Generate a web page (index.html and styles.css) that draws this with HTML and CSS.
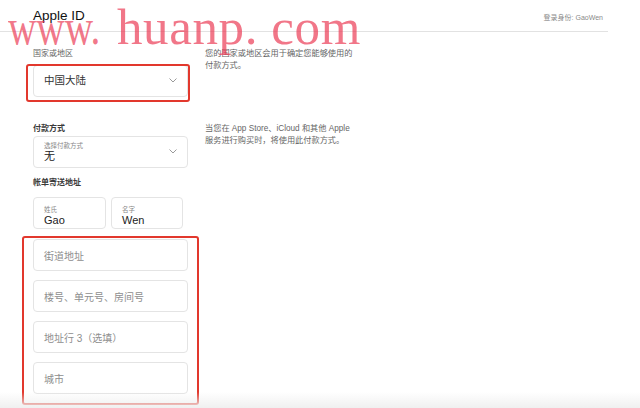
FILE: index.html
```html
<!DOCTYPE html>
<html lang="zh-CN">
<head>
<meta charset="utf-8">
<title>Apple ID</title>
<link rel="stylesheet" href="styles.css">
</head>
<body>
<header class="header">
  <div class="title">Apple ID</div>
  <div class="signed">登录身份: GaoWen</div>
</header>
<main class="main">
  <section class="row row-country">
    <div class="col-left">
      <div class="label">国家或地区</div>
      <div class="field select select-country">
        <span class="value">中国大陆</span>
        <svg class="chev" width="8" height="5" viewBox="0 0 8 5"><polyline points="0.5,0.5 4,4 7.5,0.5" fill="none" stroke="#9a9a9a" stroke-width="1"/></svg>
      </div>
    </div>
    <p class="desc">您的国家或地区会用于确定您能够使用的<br>付款方式。</p>
  </section>
  <section class="row row-pay">
    <div class="col-left">
      <div class="label strong">付款方式</div>
      <div class="field select select-pay">
        <div class="stack">
          <span class="mini">选择付款方式</span>
          <span class="value big">无</span>
        </div>
        <svg class="chev" width="8" height="5" viewBox="0 0 8 5"><polyline points="0.5,0.5 4,4 7.5,0.5" fill="none" stroke="#9a9a9a" stroke-width="1"/></svg>
      </div>
      <div class="label strong billing">帐单寄送地址</div>
      <div class="names">
        <div class="field name first">
          <span class="mini">姓氏</span>
          <span class="value latin">Gao</span>
        </div>
        <div class="field name last">
          <span class="mini">名字</span>
          <span class="value latin">Wen</span>
        </div>
      </div>
      <div class="address">
        <div class="field input"><span class="ph">街道地址</span></div>
        <div class="field input"><span class="ph">楼号、单元号、房间号</span></div>
        <div class="field input"><span class="ph">地址行 3（选填）</span></div>
        <div class="field input"><span class="ph">城市</span></div>
      </div>
    </div>
    <p class="desc">当您在 App Store、iCloud 和其他 Apple<br>服务进行购买时，将使用此付款方式。</p>
  </section>
</main>
<div class="mark mark-1"></div>
<div class="mark mark-2"></div>
<div class="watermark"><span class="wm-www">www.</span><span class="wm-rest">huanp. com</span></div>
<div class="bottom-fade"></div>
</body>
</html>
```
FILE: styles.css
```css
* { box-sizing: border-box; }
html, body { margin: 0; padding: 0; }
body {
  width: 640px;
  height: 408px;
  overflow: hidden;
  background: #fff;
  font-family: "Liberation Sans", "Noto Sans CJK SC", sans-serif;
  color: #333;
  position: relative;
}
.header {
  width: 608px;
  height: 32px;
  border-bottom: 1px solid #e2e2e2;
  display: flex;
  justify-content: space-between;
  align-items: flex-start;
  padding: 0 5px 0 33px;
}
.title {
  font-size: 13.5px;
  line-height: 16px;
  margin-top: 8px;
  color: #111;
}
.signed {
  font-size: 7px;
  line-height: 10px;
  margin-top: 13px;
  color: #8a8a8a;
}
.main {
  padding-left: 33px;
}
.row {
  display: grid;
  grid-template-columns: 155px 1fr;
  column-gap: 17px;
  align-items: start;
}
.row-country { margin-top: 16px; }
.row-pay { margin-top: 26px; }
.label {
  font-size: 8px;
  line-height: 12px;
  color: #666;
}
.label.strong {
  color: #3a3a3a;
  font-weight: 600;
}
.desc {
  margin: 0;
  font-size: 8.2px;
  line-height: 12px;
  color: #666;
  white-space: nowrap;
}
.field {
  border: 1px solid #e4e4e4;
  border-radius: 4px;
  background: #fff;
  height: 32px;
}
.select {
  display: flex;
  align-items: center;
  justify-content: space-between;
  padding: 0 10px 0 10px;
}
.select-country { margin-top: 5px; }
.select-country .value {
  font-size: 10.5px;
  color: #333;
  margin-top: -3px;
}
.select-pay { margin-top: 1px; }
.stack {
  display: flex;
  flex-direction: column;
}
.mini {
  font-size: 6.5px;
  line-height: 8px;
  color: #888;
}
.value.big {
  font-size: 11px;
  line-height: 13px;
  color: #222;
}
.chev { margin-top: -2px; }
.billing { margin-top: 9px; }
.names {
  display: flex;
  gap: 5px;
  margin-top: 8px;
}
.name {
  display: flex;
  flex-direction: column;
  padding: 8px 0 0 10px;
}
.name.first { width: 73px; }
.name.last { width: 72px; }
.value.latin {
  font-size: 11px;
  line-height: 13px;
  color: #222;
}
.address {
  display: flex;
  flex-direction: column;
  gap: 9px;
  margin-top: 10px;
}
.input {
  display: flex;
  align-items: center;
  padding-left: 10px;
}
.ph {
  font-size: 10px;
  color: #8e8e8e;
}
.mark {
  position: absolute;
  border: 2px solid #e2382d;
  border-radius: 3px;
}
.mark-1 { left: 26px; top: 64px; width: 164px; height: 38px; }
.mark-2 { left: 22px; top: 236px; width: 177px; height: 169px; }
.watermark {
  position: absolute;
  left: 0;
  top: 2px;
  width: 640px;
  height: 56px;
  font-family: "Liberation Serif", serif;
  font-size: 51px;
  line-height: 51px;
  color: rgba(235, 60, 85, 0.7);
  white-space: nowrap;
  pointer-events: none;
}
.wm-www {
  position: absolute;
  left: 8px;
  top: 0;
  transform: scaleX(0.77);
  transform-origin: left top;
}
.wm-rest {
  position: absolute;
  left: 117px;
  top: 0;
  letter-spacing: 0.6px;
}
.bottom-fade {
  position: absolute;
  left: 0;
  bottom: 0;
  width: 640px;
  height: 16px;
  background: linear-gradient(rgba(240,240,240,0), rgba(238,238,238,0.9));
  pointer-events: none;
}
```
